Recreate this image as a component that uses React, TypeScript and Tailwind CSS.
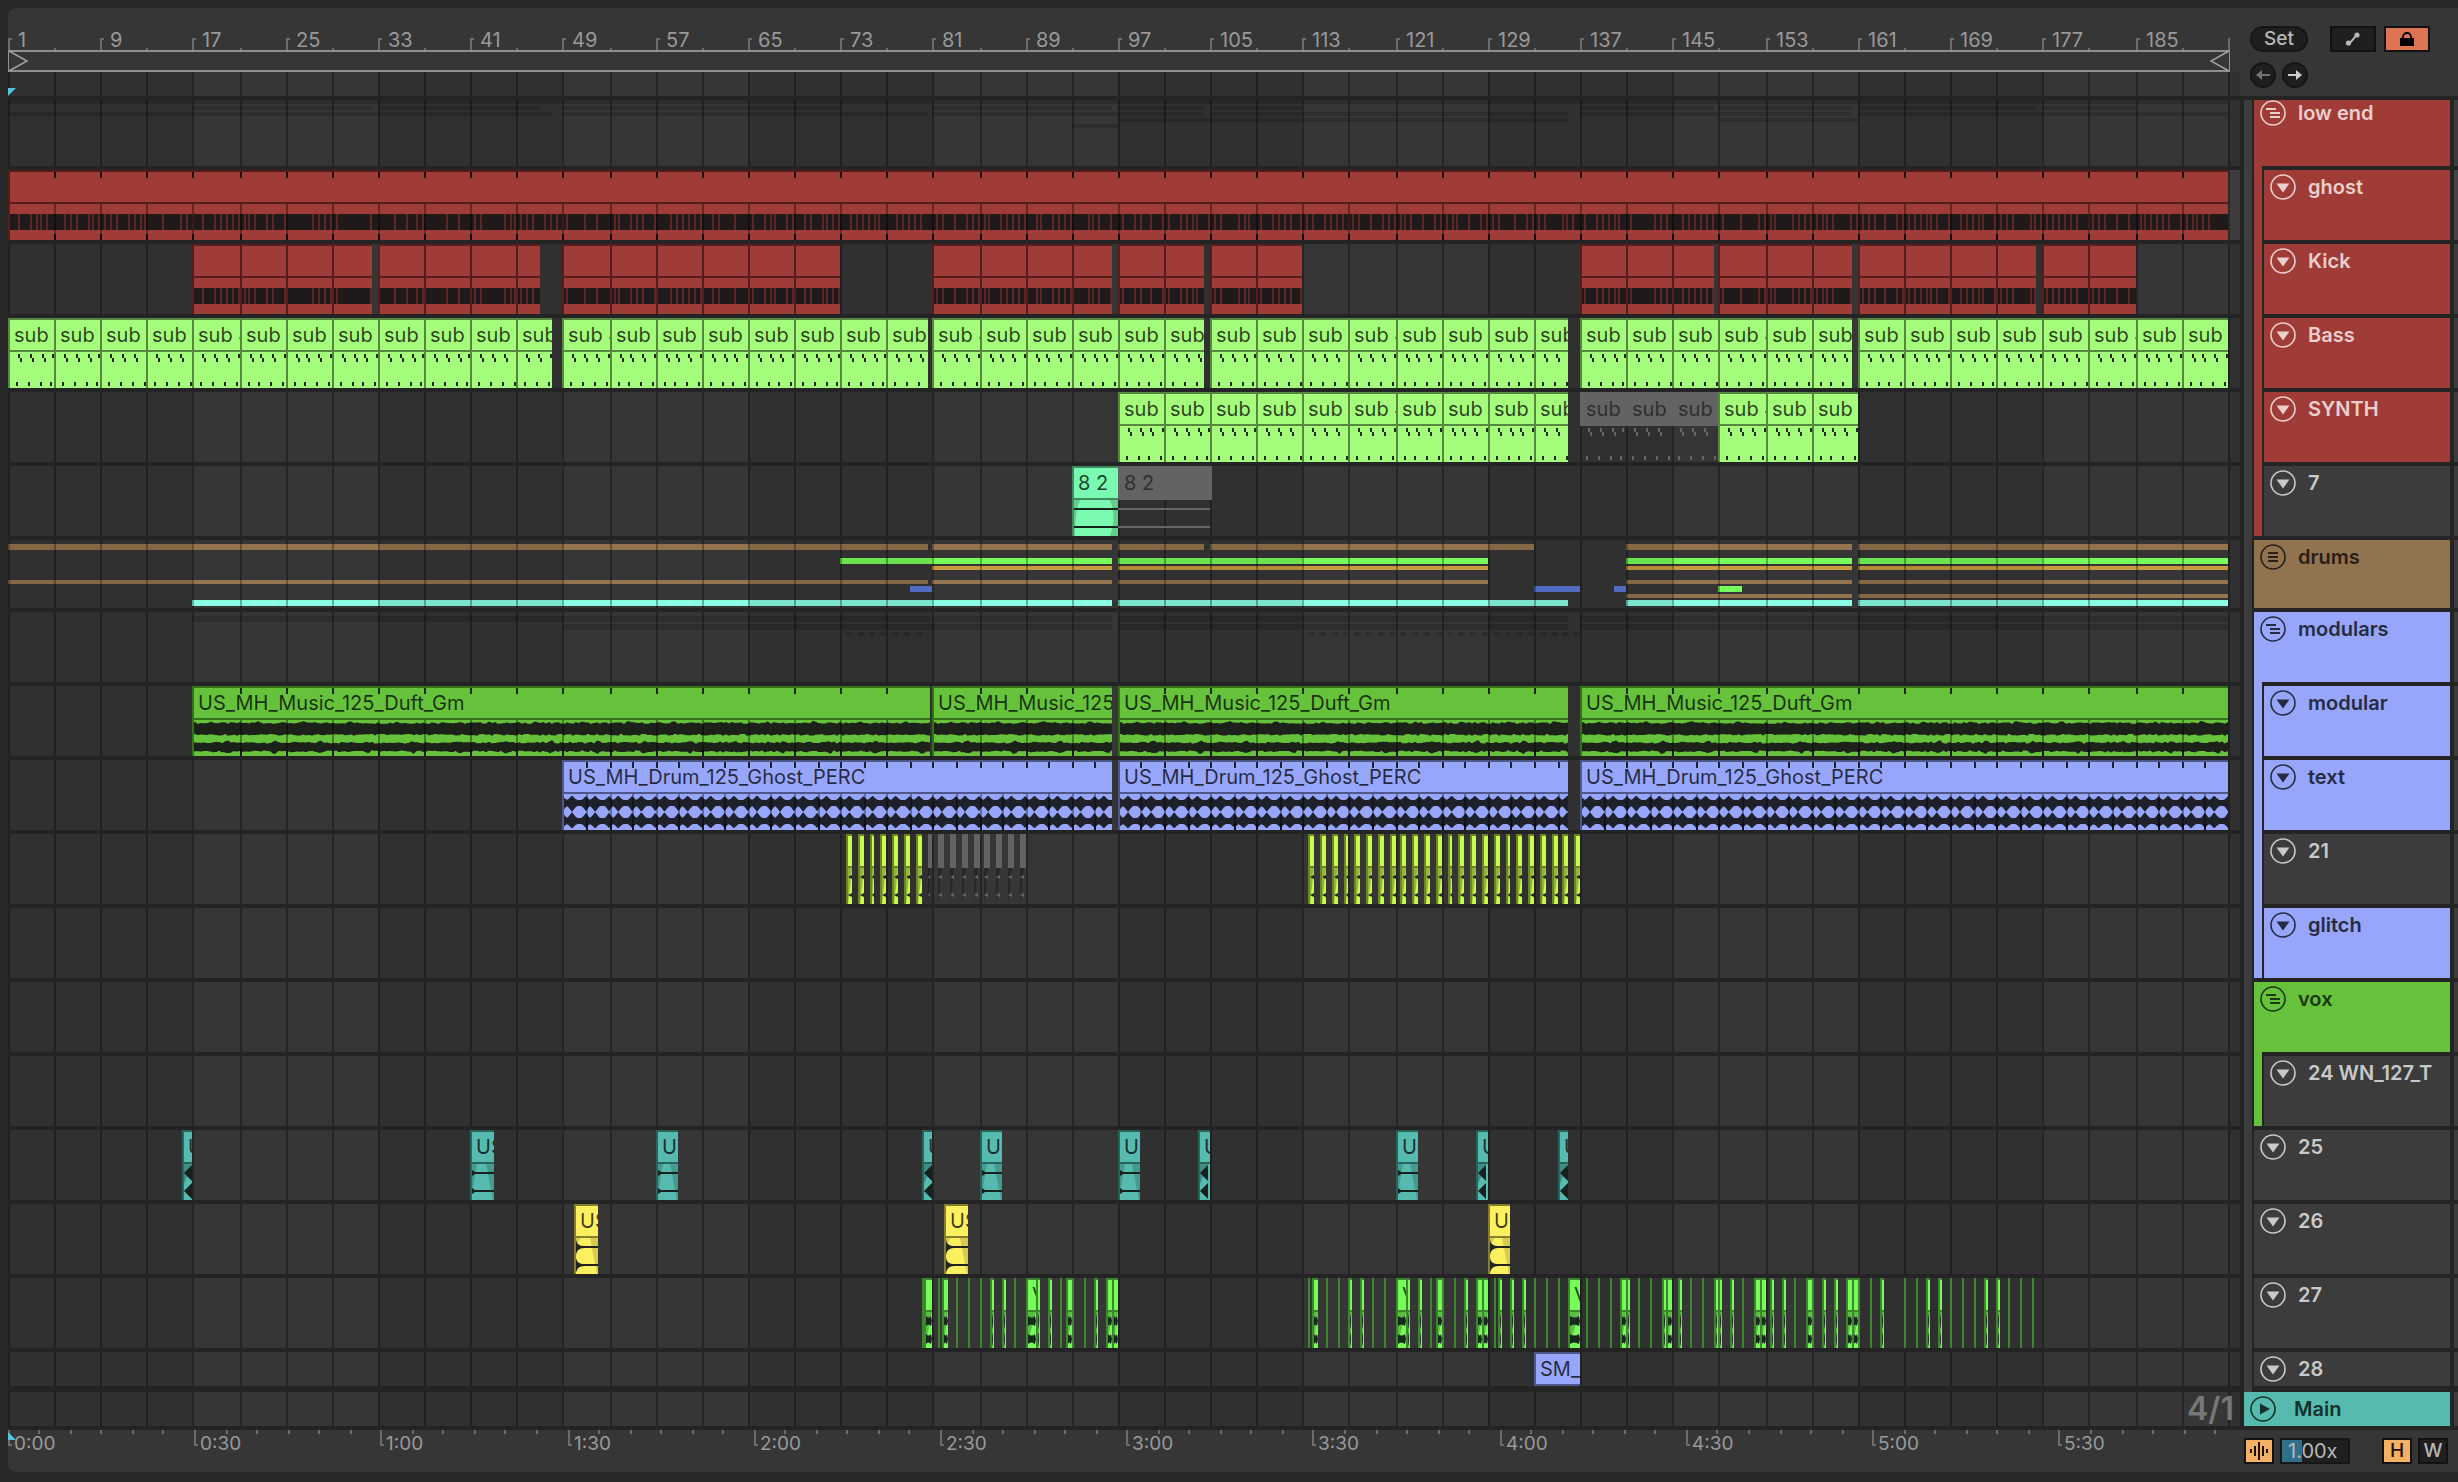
import { useState, type ReactNode } from "react";
import clsx from "clsx";

const PX_PER_BAR = 11.56;
const BARS = 192;

// bar -> lane pixel, snapped to the 2px device grid
const snap = (bar: number) => Math.floor((0.99 + PX_PER_BAR * bar) / 2) * 2;

type Range = [number, number];
type Body = "kick" | "notes" | "tone" | "wave" | "perc" | "stab" | "hit" | "decay" | "chop" | "none";

type ClipData = {
  x: number;
  w: number;
  bar: number;
  label?: string;
  muted?: boolean;
};

type Track = {
  name: string;
  kind: "group" | "folded" | "child" | "track";
  header: string;
  text: string;
  strip?: string;
  lastInGroup?: boolean;
  first?: boolean;
  short?: boolean;
  selected?: boolean;
  clip?: keyof typeof PALETTE;
  body?: Body;
  ticks?: number;
  clips?: ClipData[];
  overview?: ReactNode;
};

const PALETTE = {
  red: { box: "bg-[#a03c38] border-[#551e1d]", line: "bg-[#551e1d]", ink: "#1f1919" },
  lime: { box: "bg-[#a5fd7c] border-[#57863f]", line: "bg-[#57863f]", ink: "#1f2a1a" },
  mint: { box: "bg-[#79fab0] border-[#3f8a60]", line: "bg-[#3f8a60]", ink: "#16241c" },
  green: { box: "bg-[#66c23a] border-[#35701b]", line: "bg-[#35701b]", ink: "#1c2119" },
  blue: { box: "bg-[#97a6fa] border-[#4d5789]", line: "bg-[#4d5789]", ink: "#1e202a" },
  acid: { box: "bg-[#c9fb4e] border-[#6d8523]", line: "bg-[#6d8523]", ink: "#1f2414" },
  teal: { box: "bg-[#56bbae] border-[#2a625c]", line: "bg-[#2a625c]", ink: "#16201f" },
  yellow: { box: "bg-[#fdf05f] border-[#857e2c]", line: "bg-[#857e2c]", ink: "#24231a" },
  neon: { box: "bg-[#77fd59] border-[#3c862d]", line: "bg-[#3c862d]", ink: "#15291a" },
};

const clip = (start: number, end: number, label?: string, muted?: boolean): ClipData => ({
  x: snap(start),
  w: snap(end) - snap(start),
  bar: start,
  label,
  muted,
});

const everyFour = (ranges: Range[], label?: string, muted?: boolean) =>
  ranges.flatMap(([start, end]) => {
    const out: ClipData[] = [];
    for (let b = start; b < end; b += 4) out.push(clip(b, Math.min(b + 4, end), label, muted));
    return out;
  });

const stabs = (from: number, to: number, muted?: boolean) => {
  const out: ClipData[] = [];
  for (let b = from; b <= to; b += 1) out.push(clip(b, b + 0.5, undefined, muted));
  return out;
};

const KICK: Range[] = [
  [16, 31.5], [32, 46], [48, 72], [80, 95.5], [96, 103.5],
  [104, 112], [136, 147.5], [148, 159.5], [160, 175.5], [176, 184],
];
const BASS: Range[] = [[0, 47], [48, 79.5], [80, 103.5], [104, 135], [136, 159.5], [160, 192]];
const MODULAR: Range[] = [[16, 79.8], [80, 95.5], [96, 135], [136, 192]];
const PERC: Range[] = [[48, 95.5], [96, 135], [136, 192]];

// vocal chops: [x, width] in lane pixels
const CHOPS: [number, number][] = [
  [914, 2], [916, 8], [930, 2], [934, 6], [948, 2], [960, 2], [972, 2], [982, 4], [994, 4], [1006, 2],
  [1018, 10], [1028, 4], [1040, 4], [1052, 2], [1058, 6], [1064, 2], [1076, 2], [1086, 4], [1098, 6], [1104, 6],
  [1300, 2], [1304, 6], [1318, 2], [1330, 2], [1340, 4], [1352, 4], [1364, 2], [1376, 2], [1388, 10], [1398, 4],
  [1410, 4], [1422, 2], [1428, 6], [1434, 2], [1446, 2], [1456, 4], [1468, 6], [1474, 6], [1486, 2], [1490, 4],
  [1502, 4], [1514, 4], [1526, 2], [1538, 2], [1550, 2], [1560, 12], [1578, 2], [1590, 2], [1602, 2], [1612, 6],
  [1618, 4], [1630, 2], [1642, 2], [1654, 4], [1658, 6], [1670, 4], [1682, 2], [1694, 2], [1706, 4], [1710, 4],
  [1722, 4], [1734, 2], [1746, 6], [1752, 6], [1762, 4], [1774, 4], [1786, 2], [1798, 6], [1804, 2], [1814, 4],
  [1826, 4], [1838, 6], [1844, 6], [1850, 2], [1862, 2], [1872, 4], [1896, 2], [1908, 2], [1918, 4], [1930, 4],
  [1942, 2], [1954, 2], [1966, 2], [1976, 4], [1988, 4], [2000, 2], [2012, 2], [2024, 2],
];

function Bars({ ranges, className }: { ranges: Range[]; className: string }) {
  return (
    <>
      {ranges.map(([s, e]) => (
        <div key={s} className={clsx("absolute", className)} style={{ left: snap(s), width: snap(e) - snap(s) }} />
      ))}
    </>
  );
}

const drumsOverview = (
  <>
    <Bars className="top-1 h-1.5 bg-[#957550]" ranges={[[0, 79.5], [80, 95.5], [96, 103.5], [104, 132], [140, 159.5], [160, 192]]} />
    <Bars className="top-[18px] h-1.5 bg-[#77fd59]" ranges={[[72, 80], [80, 95.5], [96, 128], [140, 159.5], [160, 192]]} />
    <Bars className="top-[26px] h-1 bg-[#c99b3f]" ranges={[[80, 95.5], [96, 128], [140, 159.5], [160, 192]]} />
    <Bars className="top-10 h-1 bg-[#957550]" ranges={[[0, 79.5], [80, 95.5], [96, 128], [140, 159.5], [160, 192]]} />
    <Bars className="top-[46px] h-1.5 bg-[#5a78d6]" ranges={[[78, 80], [132, 136], [139, 140]]} />
    <Bars className="top-[46px] h-1.5 bg-[#77fd59]" ranges={[[148, 150]]} />
    <Bars className="top-[54px] h-1 bg-[#957550]" ranges={[[140, 159.5], [160, 192]]} />
    <Bars className="top-[60px] h-1.5 bg-[#8affe6]" ranges={[[16, 95.5], [96, 135], [140, 159.5], [160, 192]]} />
  </>
);

const lowEndOverview = (
  <>
    <Bars className="top-1 h-1 bg-black/15" ranges={[[0, 192]]} />
    <Bars className="top-2.5 h-1 bg-black/15" ranges={KICK} />
    <Bars className="top-4 h-1 bg-black/15" ranges={BASS} />
    <Bars className="top-[22px] h-1 bg-black/15" ranges={[[96, 135], [148, 160]]} />
    <Bars className="top-7 h-1 bg-black/15" ranges={[[92, 96]]} />
  </>
);

const modularsOverview = (
  <>
    <Bars className="top-1 h-1.5 bg-black/15" ranges={MODULAR} />
    <Bars className="top-3 h-1.5 bg-black/15" ranges={PERC} />
    <Bars
      className="top-5 h-1 bg-black/15"
      ranges={[...stabs(72.5, 78.5), ...stabs(112.5, 135.5)].map((c): Range => [c.bar, c.bar + 0.5])}
    />
  </>
);

const RED = "bg-[#a03c38]";
const BLUE = "bg-[#97a6fa]";
const GREEN = "bg-[#66c23a]";
const GREY = "bg-[#3c3c3c]";
const onRed = "text-[#ebcfcd]";
const onBlue = "text-[#272b42]";
const onGrey = "text-[#c9c9c9]";

const TRACKS: Track[] = [
  { name: "low end", kind: "group", header: RED, text: onRed, first: true, overview: lowEndOverview },
  { name: "ghost", kind: "child", header: RED, text: onRed, strip: RED, selected: true, clip: "red", body: "kick", ticks: 4, clips: [clip(0, 192)] },
  { name: "Kick", kind: "child", header: RED, text: onRed, strip: RED, clip: "red", body: "kick", clips: everyFour(KICK) },
  { name: "Bass", kind: "child", header: RED, text: onRed, strip: RED, clip: "lime", body: "notes", clips: everyFour(BASS, "sub 4") },
  {
    name: "SYNTH", kind: "child", header: RED, text: onRed, strip: RED, clip: "lime", body: "notes",
    clips: [...everyFour([[96, 135]], "sub 4"), ...everyFour([[136, 148]], "sub", true), ...everyFour([[148, 160]], "sub 4")],
  },
  {
    name: "7", kind: "child", header: GREY, text: onGrey, strip: RED, lastInGroup: true, clip: "mint", body: "tone",
    clips: [clip(92, 96, "8 2"), clip(96, 104.1, "8 2", true)],
  },
  { name: "drums", kind: "folded", header: "bg-[#917350]", text: "text-[#281f15]", overview: drumsOverview },
  { name: "modulars", kind: "group", header: BLUE, text: onBlue, overview: modularsOverview },
  { name: "modular", kind: "child", header: BLUE, text: onBlue, strip: BLUE, clip: "green", body: "wave", ticks: 4, clips: MODULAR.map(([s, e]) => clip(s, e, "US_MH_Music_125_Duft_Gm")) },
  { name: "text", kind: "child", header: BLUE, text: onBlue, strip: BLUE, clip: "blue", body: "perc", ticks: 2, clips: PERC.map(([s, e]) => clip(s, e, "US_MH_Drum_125_Ghost_PERC")) },
  {
    name: "21", kind: "child", header: GREY, text: onGrey, strip: BLUE, clip: "acid", body: "stab",
    clips: [...stabs(72.5, 78.5), ...stabs(79.5, 87.5, true), ...stabs(112.5, 135.5)],
  },
  { name: "glitch", kind: "child", header: BLUE, text: onBlue, strip: BLUE, lastInGroup: true },
  { name: "vox", kind: "group", header: GREEN, text: "text-[#1c3610]" },
  { name: "24 WN_127_T", kind: "child", header: GREY, text: onGrey, strip: GREEN, lastInGroup: true },
  {
    name: "25", kind: "track", header: GREY, text: onGrey, clip: "teal", body: "hit",
    clips: ([[15, 16], [40, 42], [56, 58], [79, 80], [84, 86], [96, 98], [103, 104], [120, 122], [127, 128], [134, 135]] as Range[]).map(([s, e]) => clip(s, e, "US")),
  },
  {
    name: "26", kind: "track", header: GREY, text: onGrey, clip: "yellow", body: "decay",
    clips: ([[49, 51], [81, 83], [128, 130]] as Range[]).map(([s, e]) => clip(s, e, "US")),
  },
  {
    name: "27", kind: "track", header: GREY, text: onGrey, clip: "neon", body: "chop",
    clips: CHOPS.map(([x, w]) => ({ x, w, bar: 0, label: w >= 10 ? "V" : undefined })),
  },
  { name: "28", kind: "track", header: GREY, text: onGrey, short: true, clip: "blue", body: "none", clips: [clip(132, 136, "SM_")] },
];

// closed band around y = mid, amplitude given per x
function band(w: number, mid: number, up: (x: number) => number, down: (x: number) => number) {
  const top: string[] = [];
  const bottom: string[] = [];
  for (let x = 0; x <= w; x += 1) {
    top.push(`${x},${(mid - up(x)).toFixed(1)}`);
    bottom.unshift(`${x},${(mid + down(x)).toFixed(1)}`);
  }
  return [...top, ...bottom].join(" ");
}

const noise = (n: number) => {
  const v = Math.sin(n * 12.9898) * 43758.5453;
  return v - Math.floor(v);
};

const bump = (x: number, at: number) => {
  const d = (((x - at) % 46.24) + 46.24) % 46.24;
  return Math.max(0, 1 - Math.min(d, 46.24 - d) / 4);
};

// two hits per two bars, the second one softer
const percAmp = (x: number) => {
  const p = (((x / 23.12) % 1) + 1) % 1;
  const a = Math.max(0, 1 - Math.min(p, 1 - p) / 0.24);
  const b = Math.max(0, 1 - Math.abs(p - 0.6) / 0.2);
  return Math.max(a ** 1.4, b ** 1.4 * 0.9);
};

function ClipBody({ data, body, ink }: { data: ClipData; body: Body; ink: string }) {
  const { x, w, bar, muted } = data;
  const fill = muted ? "#666666" : ink;
  const inner = w - 2;
  let shapes: ReactNode = null;

  if (body === "kick") {
    const lines: number[] = [];
    for (let i = Math.ceil(bar * 2); snap(i / 2) < x + w; i++) {
      if (noise(i) > 0.35) lines.push(snap(i / 2) - x + 2);
    }
    shapes = (
      <>
        <rect y="10" width={inner} height="16" fill={ink} />
        {lines.map((l) => (
          <rect key={l} x={l} y="10" width="2" height="16" fill="#5a2726" />
        ))}
      </>
    );
  } else if (body === "notes") {
    shapes = [0, 1, 2, 3].map((i) => {
      const nx = snap(bar + i) - x + 8;
      return (
        <g key={i} fill={fill}>
          <rect x={nx} y="2" width="2" height="4" />
          <rect x={nx + 2} y="6" width="2" height="4" />
          <rect x={nx - 2} y="30" width="2" height="4" />
        </g>
      );
    });
  } else if (body === "tone") {
    shapes = (
      <>
        {!muted && (
          <g fill="#000000" fillOpacity="0.18">
            <path d="M0 0h6Q1 12 1 36H0z" />
            <path d={`M${inner} 0h-8Q${inner - 1} 18 ${inner - 8} 36h8z`} />
          </g>
        )}
        <rect y="8" width={inner} height="2" fill={fill} />
        <rect y="26" width={inner} height="2" fill={fill} />
      </>
    );
  } else if (body === "wave") {
    const jag = (base: number, s: number) => (px: number) => base + noise(Math.floor(px / 3) + s) * 1.6;
    const lowerUp = jag(3.6, 3);
    const lowerDown = jag(3.6, 4);
    const upperUp = jag(5.2, 1);
    shapes = (
      <g fill={ink}>
        <polygon points={band(inner, 9, (p) => upperUp(p) + bump(p, 18) * 1.5, jag(5, 2))} />
        <polygon points={band(inner, 27, (p) => lowerUp(p) + bump(p, 34) * 1.5, (p) => lowerDown(p) + bump(p, 34) * 2)} />
      </g>
    );
  } else if (body === "perc") {
    const near = (p: number) => 3 + percAmp(p - 8) * 6;
    const far = (p: number) => 3 + percAmp(p - 8) * 4.5;
    shapes = (
      <g fill={ink}>
        <polygon points={band(inner, 9, far, near)} />
        <polygon points={band(inner, 27, near, far)} />
      </g>
    );
  } else if (body === "stab") {
    shapes = (
      <>
        <path d={`M0 0h${inner}L0 36z`} fill="#000000" fillOpacity="0.28" />
        <path d={`M0 9L${inner} 7v4zM0 27L${inner} 25v4z`} fill={fill} />
      </>
    );
  } else if (body === "hit") {
    shapes =
      w <= 12 ? (
        <>
          <path d="M0 0h8L0 20z" fill="#000000" fillOpacity="0.25" />
          <path d="M0 9L8 1v16zM0 27L8 19v16z" fill={ink} />
        </>
      ) : (
        <>
          <path d={`M0 0h5L0 30zM${inner} 0h-8l7 36h1z`} fill="#000000" fillOpacity="0.18" />
          <path d={`M0 6l3 2h${inner}v2H3l-3 2zM0 24l3 2h${inner}v2H3l-3 2z`} fill={ink} />
        </>
      );
  } else if (body === "decay") {
    shapes = (
      <>
        <path d={`M0 0h5L0 8zM${inner} 0h-8l7 36h1z`} fill="#000000" fillOpacity="0.15" />
        <path d={`M0 2Q1 8 8 8h${inner}v2H8Q1 10 0 17zM0 20Q1 26 8 26h${inner}v2H8Q1 28 0 35z`} fill={ink} />
      </>
    );
  } else if (body === "chop" && inner > 0) {
    shapes = (
      <>
        <path d={`M0 0h${inner}L0 30z`} fill="#000000" fillOpacity="0.25" />
        {inner < 4 ? (
          <path d="M0 1q2 8 0 17zM0 19q2 8 0 17z" fill={ink} />
        ) : (
          <path d={`M0 4q${inner / 2} 3 ${inner - 1} 0l1 5-1 5q${-inner / 2} -3 ${1 - inner} 0zM0 22q${inner / 2} 3 ${inner - 1} 0l1 5-1 5q${-inner / 2} -3 ${1 - inner} 0z`} fill={ink} />
        )}
      </>
    );
  }

  return (
    <svg width={Math.max(inner, 0)} height="36" className="block" aria-hidden="true">
      {shapes}
    </svg>
  );
}

function Clip({ data, track }: { data: ClipData; track: Track }) {
  const colors = PALETTE[track.clip!];
  const ticks: number[] = [];
  if (track.ticks) {
    const first = Math.ceil((data.bar + 0.5) / track.ticks) * track.ticks;
    for (let b = first; snap(b) < data.x + data.w - 2; b += track.ticks) ticks.push(snap(b) - data.x - 2);
  }

  return (
    <div
      className={clsx(
        "absolute inset-y-0 z-20 overflow-hidden",
        data.muted ? "text-[#2f2f2f]" : clsx("border-l-2 border-t-2 text-black/75", colors.box),
        track.short && "border-b-2"
      )}
      style={{ left: data.x, width: data.w }}
    >
      <div className={clsx("whitespace-nowrap text-[20px]", data.muted ? "h-[34px] bg-[#636363] pl-1.5 leading-[34px]" : "h-[30px] pl-1 leading-[30px]")}>
        {data.label}
      </div>
      {!track.short && (
        <>
          {!data.muted && <div className={clsx("h-0.5", colors.line)} />}
          <ClipBody data={data} body={track.body!} ink={colors.ink} />
        </>
      )}
      {ticks.map((t) => (
        <div key={t}>
          <div className="absolute top-0 h-1.5 w-0.5 bg-black/80" style={{ left: t }} />
          <div className="absolute bottom-0 h-9 w-0.5 bg-black/35" style={{ left: t }} />
          <div className="absolute bottom-0 h-1.5 w-0.5 bg-black/80" style={{ left: t }} />
        </div>
      ))}
    </div>
  );
}

function Grid() {
  return (
    <div className="pointer-events-none absolute inset-0 z-10 overflow-hidden">
      {[0, 2, 4, 6, 8, 10, 12].map((g) => (
        <div
          key={g}
          className="absolute inset-y-0 bg-black/10"
          style={{ left: snap(g * 16), width: snap(g * 16 + 16) - snap(g * 16) }}
        />
      ))}
      {Array.from({ length: BARS / 4 + 1 }, (_, k) => (
        <div key={k} className="absolute inset-y-0 w-0.5 bg-black/30" style={{ left: snap(k * 4) }} />
      ))}
    </div>
  );
}

function TrackIcon({ kind }: { kind: Track["kind"] }) {
  return (
    <svg viewBox="0 0 26 26" className="size-[26px]" aria-hidden="true">
      <circle cx="13" cy="13" r="12" fill="none" stroke="currentColor" strokeWidth="1.6" />
      {kind === "group" && <path d="M6 9h10M10 13h10M10 17h10" stroke="currentColor" strokeWidth="1.8" />}
      {kind === "folded" && <path d="M8 9h10M8 13h10M8 17h10" stroke="currentColor" strokeWidth="2" />}
      {(kind === "child" || kind === "track") && <path d="M6.5 9.5h13L13 18.5z" fill="currentColor" />}
    </svg>
  );
}

function TrackHeader({ track }: { track: Track }) {
  return (
    <div className="flex w-[218px] shrink-0 bg-[#242424] pl-1">
      <div className={clsx("w-2", track.selected ? "bg-[#3f3f3f]" : "bg-[#3c3c3c]")} />
      <div className="ml-0.5 flex w-[196px]">
        {track.kind === "child" && (
          <div className={clsx("mr-0.5 w-2 shrink-0", track.strip, track.lastInGroup && "mb-1")} />
        )}
        <div className="flex min-w-0 flex-1 flex-col">
          <div className={clsx("flex flex-1 items-start pl-1.5 pt-1", track.header, track.text)}>
            <button type="button" aria-label={`Fold ${track.name}`} className="shrink-0">
              <TrackIcon kind={track.kind} />
            </button>
            <span className="ml-3 whitespace-nowrap text-[20px] font-semibold leading-[26px]">{track.name}</span>
          </div>
          <div className={track.short ? "h-1.5" : "h-1"}>
            {track.kind === "group" && <div className={clsx("h-1 w-2", track.header)} />}
          </div>
        </div>
      </div>
      <div className={clsx("ml-1 w-1", track.short ? "mb-1.5" : "mb-1", track.selected ? "bg-[#454545]" : "bg-[#3c3c3c]")} />
    </div>
  );
}

function TrackRow({ track }: { track: Track }) {
  return (
    <div
      className={clsx(
        "flex",
        track.first && "-mt-1",
        track.short ? "h-10" : track.kind === "folded" ? "h-[72px]" : "h-[74px]"
      )}
    >
      <div className={clsx("min-w-0 flex-1 border-[#242424]", track.short ? "border-b-6" : "border-b-4")}>
        <div className={clsx("relative h-full overflow-hidden", track.selected ? "bg-[#454545]" : "bg-[#363636]")}>
          {track.overview}
          <Grid />
          {track.clips?.map((c) => <Clip key={c.x} data={c} track={track} />)}
        </div>
      </div>
      <TrackHeader track={track} />
    </div>
  );
}

function BarRuler() {
  return (
    <div className="flex min-w-0 flex-1 flex-col">
      <div className="relative h-[42px] text-[#999999]">
        {Array.from({ length: 48 }, (_, k) =>
          k % 2 === 0 ? (
            <div key={k} className="absolute bottom-0 flex h-3 border-l-2 border-[#6c6c6c]" style={{ left: snap(k * 4) }}>
              <div className="h-0.5 w-0.5 bg-[#6c6c6c]" />
              <span className="-mt-3 ml-1.5 text-[20px] leading-[28px]">{k * 4 + 1}</span>
            </div>
          ) : (
            <div key={k} className="absolute bottom-0 h-0.5 w-0.5 bg-[#6c6c6c]" style={{ left: snap(k * 4) }} />
          )
        )}
        <div className="absolute bottom-0 h-3 w-0.5 bg-[#6c6c6c]" style={{ left: snap(BARS) }} />
      </div>
      <div
        className="flex h-[22px] justify-between border-x border-y-2 border-[#8f8f8f] text-[#a0a0a0]"
        style={{ width: snap(BARS) + 2 }}
      >
        <svg width="20" height="18" className="overflow-visible" aria-hidden="true">
          <path d="M0 -1L18 9L0 19" fill="none" stroke="currentColor" strokeWidth="1.5" />
        </svg>
        <svg width="20" height="18" className="overflow-visible" aria-hidden="true">
          <path d="M20 -1L2 9L20 19" fill="none" stroke="currentColor" strokeWidth="1.5" />
        </svg>
      </div>
      <div className="relative h-6">
        <Grid />
        <svg width="8" height="8" className="absolute bottom-0 left-0 z-20" aria-hidden="true">
          <path d="M0 0h8L0 8z" fill="#56c1da" />
        </svg>
      </div>
    </div>
  );
}

function TimeRuler() {
  const step = 31.08;
  return (
    <div className="relative h-[42px] min-w-0 flex-1 overflow-hidden rounded-bl-lg text-[#999999]">
      {Array.from({ length: 72 }, (_, n) => {
        const left = Math.floor((0.6 + step * n) / 2) * 2;
        if (n % 6) return <div key={n} className="absolute top-0 h-1 w-0.5 bg-[#6c6c6c]" style={{ left }} />;
        const secs = n * 5;
        return (
          <div key={n} className="absolute top-0 flex h-4 items-end border-l-2 border-[#6c6c6c]" style={{ left }}>
            <div className="h-0.5 w-0.5 bg-[#6c6c6c]" />
            <span className="-mb-3 ml-0.5 text-[19px] leading-[28px]">
              {Math.floor(secs / 60)}:{String(secs % 60).padStart(2, "0")}
            </span>
          </div>
        );
      })}
      <svg width="8" height="8" className="absolute left-0 top-0.5" aria-hidden="true">
        <path d="M0 0v8h8z" fill="#56c1da" />
      </svg>
    </div>
  );
}

function Toolbar() {
  const [locked, setLocked] = useState(true);
  return (
    <div className="flex w-[218px] shrink-0 flex-col gap-2.5 pl-2.5 pt-[18px] text-[#b8b8b8]">
      <div className="flex">
        <button type="button" className="h-[26px] w-[58px] rounded-full border-2 border-[#161616] bg-[#1f1f1f] text-[19px] font-medium leading-[22px]">
          Set
        </button>
        <button type="button" aria-label="Automation mode" className="ml-[22px] flex h-[26px] w-[46px] items-center justify-center border-2 border-[#121212] bg-[#1f1f1f]">
          <svg width="16" height="16" viewBox="0 0 16 16" aria-hidden="true">
            <path d="M4 12C7 11 9 6 12 4" stroke="currentColor" strokeWidth="2" fill="none" />
            <circle cx="3.5" cy="12" r="2.6" fill="currentColor" />
            <circle cx="12" cy="4" r="2.6" fill="currentColor" />
          </svg>
        </button>
        <button
          type="button"
          aria-label="Lock envelopes"
          aria-pressed={locked}
          onClick={() => setLocked(!locked)}
          className={clsx("ml-2 flex h-[26px] w-[46px] items-center justify-center border-2 border-[#121212]", locked ? "bg-[#dc7451]" : "bg-[#1f1f1f]")}
        >
          <svg width="16" height="16" viewBox="0 0 16 16" aria-hidden="true">
            <path d="M4 8V6a4 4 0 0 1 8 0v2" stroke="#000000" strokeWidth="1.8" fill="none" />
            <rect x="1" y="7" width="14" height="8" fill="#000000" />
          </svg>
        </button>
      </div>
      <div className="flex gap-1.5">
        <button type="button" aria-label="Previous locator" className="flex size-[26px] items-center justify-center rounded-full border-2 border-[#161616] bg-[#1f1f1f] text-[#737373]">
          <svg width="14" height="12" viewBox="0 0 14 12" className="shrink-0" aria-hidden="true">
            <path d="M14 6H4" stroke="currentColor" strokeWidth="2" />
            <path d="M0 6l6-5v10z" fill="currentColor" />
          </svg>
        </button>
        <button type="button" aria-label="Next locator" className="flex size-[26px] items-center justify-center rounded-full border-2 border-[#161616] bg-[#1f1f1f] text-[#cccccc]">
          <svg width="14" height="12" viewBox="0 0 14 12" className="shrink-0" aria-hidden="true">
            <path d="M0 6h10" stroke="currentColor" strokeWidth="2" />
            <path d="M14 6L8 1v10z" fill="currentColor" />
          </svg>
        </button>
      </div>
    </div>
  );
}

function BottomControls() {
  return (
    <div className="flex w-[218px] shrink-0 pl-1 pt-2">
      <button type="button" aria-label="Waveform zoom" className="flex h-[26px] w-[30px] items-center justify-center border-2 border-[#121212] bg-[#f4b063]">
        <svg width="20" height="18" viewBox="0 0 20 18" aria-hidden="true">
          <path d="M2 7v4M6 4v10M10 0v18M14 4v10M18 7v4" stroke="#1a1208" strokeWidth="2" />
        </svg>
      </button>
      <input
        aria-label="Waveform height"
        defaultValue="1.00x"
        className="ml-1.5 h-[26px] w-[70px] border-2 border-[#161616] bg-linear-to-r from-[#31708a] from-30% to-[#1f1f1f] to-30% pl-1.5 text-[20px] leading-[22px] text-[#b8b8b8]"
      />
      <button type="button" className="ml-8 h-[26px] w-[30px] border-2 border-[#121212] bg-[#f4b063] text-[19px] font-medium leading-[22px] text-[#1a1208]">
        H
      </button>
      <button type="button" className="ml-1.5 h-[26px] w-[30px] border-2 border-[#121212] bg-[#1f1f1f] text-[19px] font-medium leading-[22px] text-[#b8b8b8]">
        W
      </button>
    </div>
  );
}

export default function App() {
  return (
    <div className="min-h-screen bg-[#292929] pl-2 pt-2 font-['Inter','Liberation_Sans',sans-serif]">
      <main className="overflow-hidden rounded-l-lg bg-[#363636]">
        <div className="flex h-[88px]">
          <BarRuler />
          <Toolbar />
        </div>

        <div className="overflow-hidden border-t-4 border-[#242424]">
          {TRACKS.map((t) => (
            <TrackRow key={t.name} track={t} />
          ))}
        </div>

        {/* main track */}
        <div className="flex h-[38px] border-b-4 border-[#242424]">
          <div className="relative min-w-0 flex-1">
            <Grid />
            <span className="absolute right-1.5 top-0 z-20 text-[32px] font-semibold leading-[34px] text-[#777777]">4/1</span>
          </div>
          <div className="flex w-[218px] shrink-0 bg-[#242424] pl-1">
            <div className="flex w-[206px] items-center bg-[#56bbae] pl-1.5 text-[#14312d]">
              <button type="button" aria-label="Show main track">
                <svg viewBox="0 0 26 26" className="block size-[26px]" aria-hidden="true">
                  <circle cx="13" cy="13" r="12" fill="none" stroke="currentColor" strokeWidth="1.6" />
                  <path d="M10 7.5v11L20 13z" fill="currentColor" />
                </svg>
              </button>
              <span className="ml-[18px] text-[20px] font-semibold">Main</span>
            </div>
            <div className="ml-1 w-1 bg-[#3c3c3c]" />
          </div>
        </div>

        <div className="flex">
          <TimeRuler />
          <BottomControls />
        </div>
      </main>
    </div>
  );
}
